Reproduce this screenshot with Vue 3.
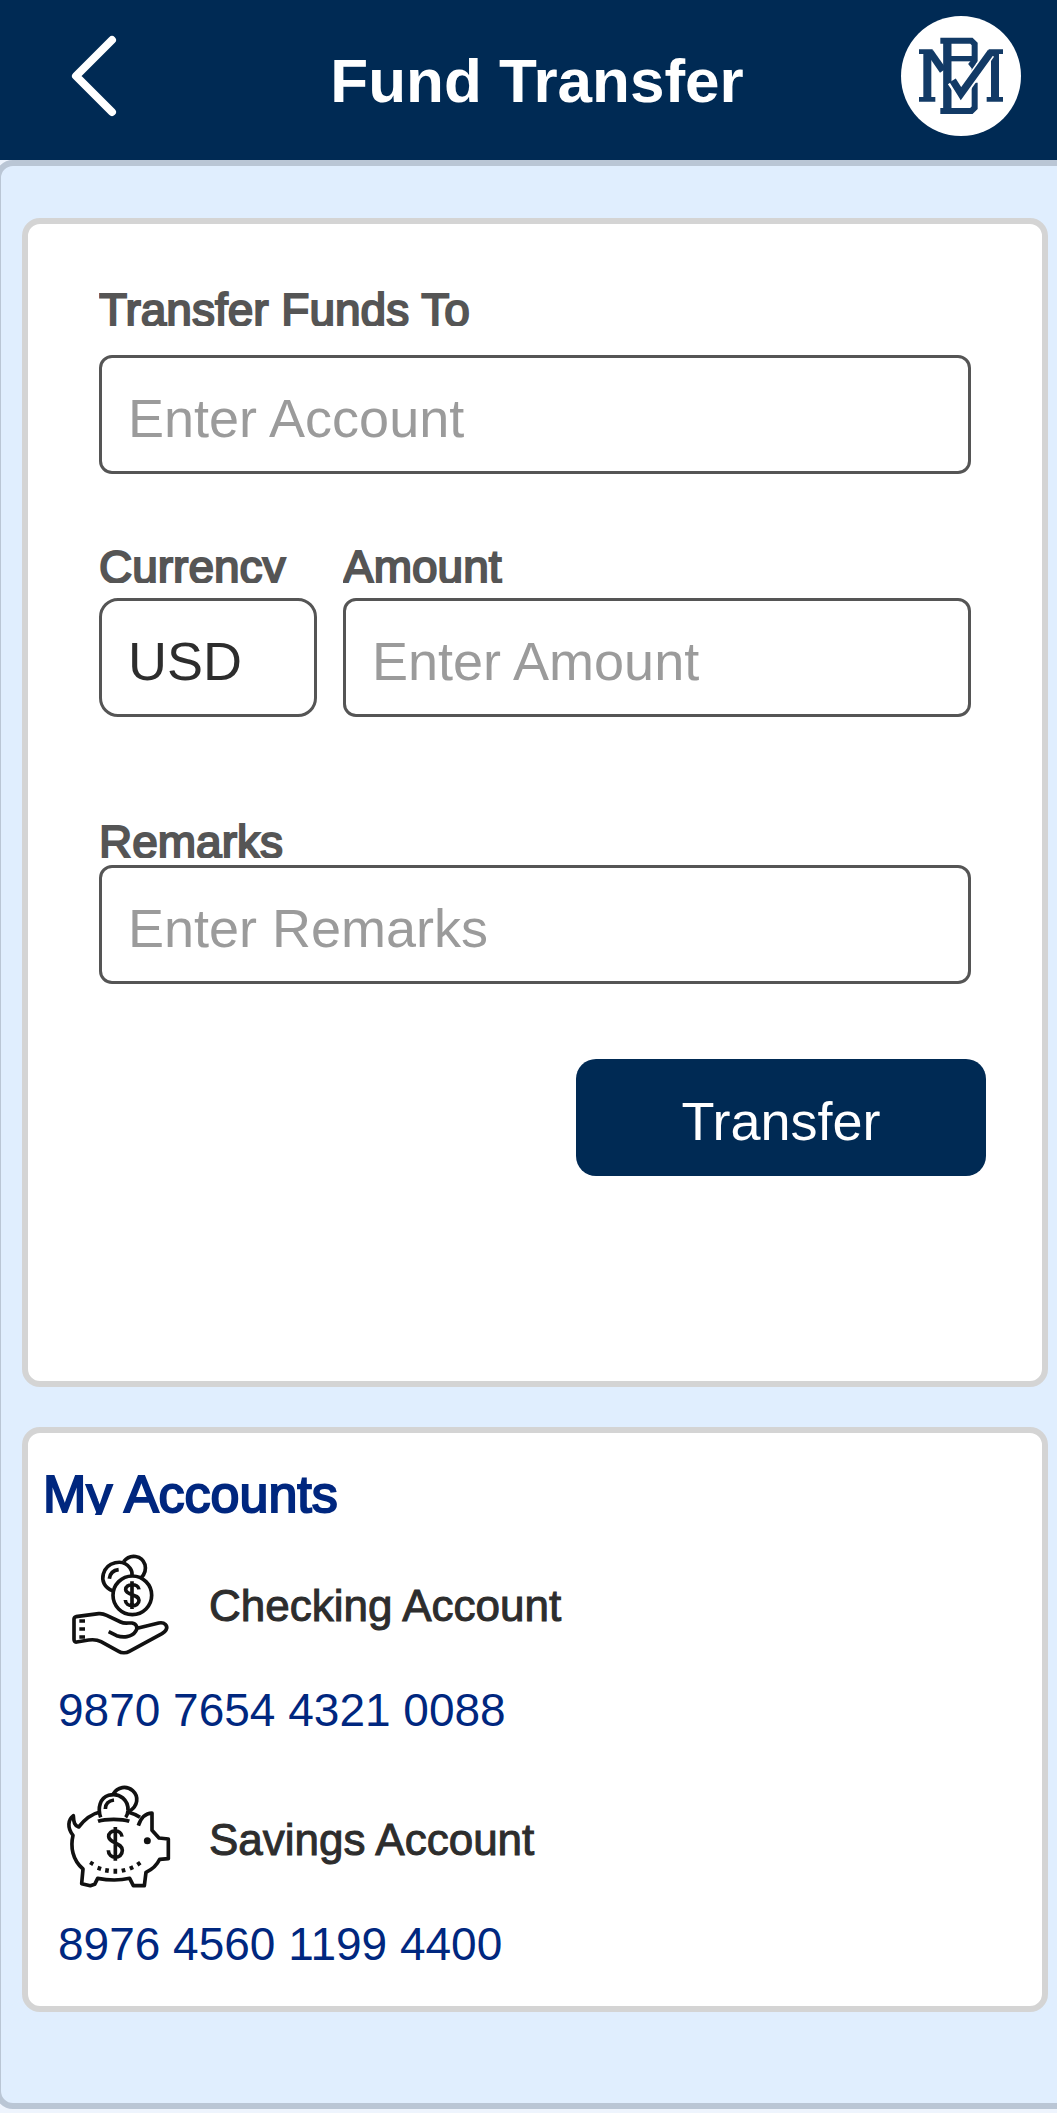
<script setup>
import { ref } from 'vue';

const account = ref('');
const currency = ref('USD');
const amount = ref('');
const remarks = ref('');

const currencies = ['USD', 'EUR', 'GBP'];

const accounts = [
  { type: 'checking', name: 'Checking Account', number: '9870 7654 4321 0088' },
  { type: 'savings', name: 'Savings Account', number: '8976 4560 1199 4400' },
];
</script>

<template>
  <div class="page">
    <header class="header">
      <button type="button" class="back-btn" aria-label="Back">
        <svg class="back-icon" viewBox="0 0 56 88">
          <polyline points="46,8 10,44 46,80" />
        </svg>
      </button>
      <h1 class="title">Fund Transfer</h1>
      <!-- Bank monogram -->
      <svg class="logo" viewBox="63 48 360 360" role="img" aria-label="Bank logo">
        <circle cx="243" cy="228" r="180" fill="#fff" />
        <g fill="none" stroke="#123a66">
          <path d="M202 120V335" stroke-width="25" />
          <path d="M181 122H274L284 132V182L276 192L284 202V212" stroke-width="18" />
          <path d="M210 176H277" stroke-width="16" />
          <path d="M181 333H274L284 323V248" stroke-width="18" />
          <path d="M142 156V298M345 156V298" stroke-width="24" />
          <path d="M117 155H158M326 155H369M117 298H166M320 298H369" stroke-width="14" />
          <path d="M150 156L189 212" stroke-width="22" />
          <path d="M217 244L243 283L329 161" stroke="#fff" stroke-width="32" />
          <path d="M218 241L243 281L333 156" stroke-width="22" />
        </g>
      </svg>
    </header>

    <main class="panel">
      <form class="card transfer-card" @submit.prevent>
        <div class="fields">
          <div class="field field-account">
            <label for="account">Transfer Funds To</label>
            <input id="account" v-model="account" type="text" placeholder="Enter Account" />
          </div>
          <div class="row">
            <div class="field field-currency">
              <label for="currency">Currency</label>
              <select id="currency" v-model="currency">
                <option v-for="c in currencies" :key="c" :value="c">{{ c }}</option>
              </select>
            </div>
            <div class="field field-amount">
              <label for="amount">Amount</label>
              <input id="amount" v-model="amount" type="text" placeholder="Enter Amount" />
            </div>
          </div>
          <div class="field field-remarks">
            <label for="remarks">Remarks</label>
            <input id="remarks" v-model="remarks" type="text" placeholder="Enter Remarks" />
          </div>
        </div>
        <button type="submit" class="transfer-btn">Transfer</button>
      </form>

      <section class="card accounts-card">
        <h2 class="accounts-title">My Accounts</h2>
        <ul class="accounts">
          <li v-for="item in accounts" :key="item.type" class="account">
            <div class="account-head">
              <!-- Hand with coins -->
              <svg v-if="item.type === 'checking'" class="account-icon" viewBox="45 30 324 324">
                <path d="M188 152C164 144 154 122 160 102C170 66 218 54 240 84C246 92 247 98 246 106" />
                <path d="M221 65C240 40 276 46 285 74C289 90 283 104 273 114" />
                <path d="M178 116C180 101 190 91 206 89" />
                <circle cx="247" cy="166" r="58" />
                <path d="M267 148C265 129 226 130 227 149C228 167 267 161 267 181C267 203 227 203 226 180M246 124V207" />
                <path d="M176 275L200 287C218 293 245 293 257 274C265 262 259 251 246 249H236C226 250 220 250 212 246L170 226C162 222 156 220 146 221L78 230C74 231 72 233 72 237V298C72 303 74 307 80 306L116 300C130 298 140 298 153 305L206 334C214 339 228 340 238 334L336 281C341 278 345 275 348 270C355 258 344 245 326 249L262 265" />
                <path d="M88 243H105M88 267H105M88 291H105" />
              </svg>
              <!-- Piggy bank -->
              <svg v-else class="account-icon" viewBox="45 42 324 324">
                <path d="M152 142C142 114 150 84 176 76C210 66 236 92 234 122C233 132 231 137 227 142" />
                <path d="M190 72C202 50 230 46 248 62C268 80 263 108 239 123" />
                <path d="M166 117C166 102 176 92 192 90" />
                <path d="M144 154C166 146 216 146 238 154" />
                <path d="M150 126C124 132 104 148 86 171C74 167 71 158 70 137C54 148 51 174 69 196C61 230 67 270 99 297L95 341L121 347L134 343L143 325C174 331 208 332 239 325L250 347H283L288 307C306 299 320 287 329 268L355 266V207L327 204L306 181V129C288 130 274 138 265 167" />
                <path d="M236 127C250 131 260 135 270 142" />
                <circle cx="292" cy="212" r="5" fill="#111" />
                <path d="M216 200C215 177 175 177 176 200C177 220 217 218 217 241C217 269 175 268 175 241M196 171V272" />
                <path d="M128 275L122 285M150 289L146 301M172 295L170 308M196 296V311M219 295L222 307M242 288L247 299M263 276L270 286" />
              </svg>
              <span class="account-name">{{ item.name }}</span>
            </div>
            <a href="#" class="account-number">{{ item.number }}</a>
          </li>
        </ul>
      </section>
    </main>
  </div>
</template>

<style>
body {
  margin: 0;
  background: #eef4fd;
}
</style>

<style scoped>
.page {
  min-height: 100vh;
  overflow: hidden;
  box-sizing: border-box;
  padding-bottom: 4px;
  font-family: "Liberation Sans", Arial, sans-serif;
  color: #2d2d2d;
}

/* Header */
.header {
  display: flex;
  align-items: center;
  height: 160px;
  box-sizing: border-box;
  padding: 0 36px 8px;
  background: #002a54;
}

.back-btn {
  flex: none;
  display: flex;
  width: 137px;
  padding: 0 0 0 30px;
  border: none;
  background: none;
  cursor: pointer;
}

.back-icon {
  width: 56px;
  height: 88px;
  fill: none;
  stroke: #fff;
  stroke-width: 8;
  stroke-linecap: round;
  stroke-linejoin: round;
}

.title {
  flex: 1;
  margin: 0;
  padding-top: 10px;
  font-size: 62px;
  line-height: 68px;
  font-weight: bold;
  text-align: center;
  color: #fff;
}

.logo {
  flex: none;
  width: 120px;
  height: 120px;
}

/* The side borders run past the edges of the screen */
.panel {
  margin: 0 -26px 0 -5px;
  padding: 52px 29px 91px 21px;
  border: 6px solid #bac6d5;
  border-radius: 18px;
  background: #e0eefe;
}

.card {
  border: 6px solid #d4d4d4;
  border-radius: 18px;
  background: #fff;
}

/* Transfer form */
.transfer-card {
  display: flex;
  flex-direction: column;
  margin-bottom: 40px;
  padding: 60px 56px 205px 71px;
}

.fields {
  margin-right: 15px;
}

.row {
  display: flex;
  gap: 26px;
  margin: 67px 0 99px;
}

.field {
  display: flex;
  flex-direction: column;
  gap: 15px;
}

.field-account {
  gap: 29px;
}

.field-currency {
  flex: none;
  width: 218px;
}

.field-amount {
  flex: 1;
  min-width: 0;
}

.field-remarks {
  gap: 7px;
}

label {
  height: 42px;
  overflow: hidden;
  font-size: 46px;
  line-height: 52px;
  white-space: nowrap;
  color: #555;
  -webkit-text-stroke: 2px #555;
}

input,
select {
  appearance: none;
  width: 100%;
  height: 119px;
  box-sizing: border-box;
  margin: 0;
  padding: 6px 26px 0;
  border: 3px solid #555;
  border-radius: 13px;
  background: #fff;
  font-family: inherit;
  font-size: 54px;
  color: #2d2d2d;
}

select {
  border-radius: 19px;
}

input::placeholder {
  color: #9b9b9b;
  opacity: 1;
}

.transfer-btn {
  align-self: flex-end;
  width: 410px;
  height: 117px;
  margin-top: 75px;
  padding: 6px 0 0;
  border: none;
  border-radius: 20px;
  background: #002a54;
  font-family: inherit;
  font-size: 54px;
  color: #fff;
  cursor: pointer;
}

/* Accounts */
.accounts-card {
  padding: 32px 15px 36px;
}

.accounts-title {
  height: 50px;
  margin: 0 0 35px;
  overflow: hidden;
  font-size: 52px;
  line-height: 58px;
  font-weight: normal;
  color: #00277f;
  -webkit-text-stroke: 2px #00277f;
}

.accounts {
  display: flex;
  flex-direction: column;
  gap: 48px;
  margin: 0;
  padding: 0 0 0 15px;
  list-style: none;
}

.account {
  display: flex;
  flex-direction: column;
  align-items: flex-start;
  gap: 26px;
}

.account-head {
  display: flex;
  align-items: center;
  gap: 36px;
  padding-left: 7px;
}

.account-icon {
  width: 108px;
  height: 108px;
  fill: none;
  stroke: #111;
  stroke-width: 11;
  stroke-linejoin: round;
}

.account-name {
  padding-top: 4px;
  font-size: 44px;
  line-height: 50px;
  -webkit-text-stroke: 1px #2d2d2d;
}

.account-number {
  font-size: 46px;
  line-height: 52px;
  color: #00277f;
  text-decoration: none;
}
</style>
